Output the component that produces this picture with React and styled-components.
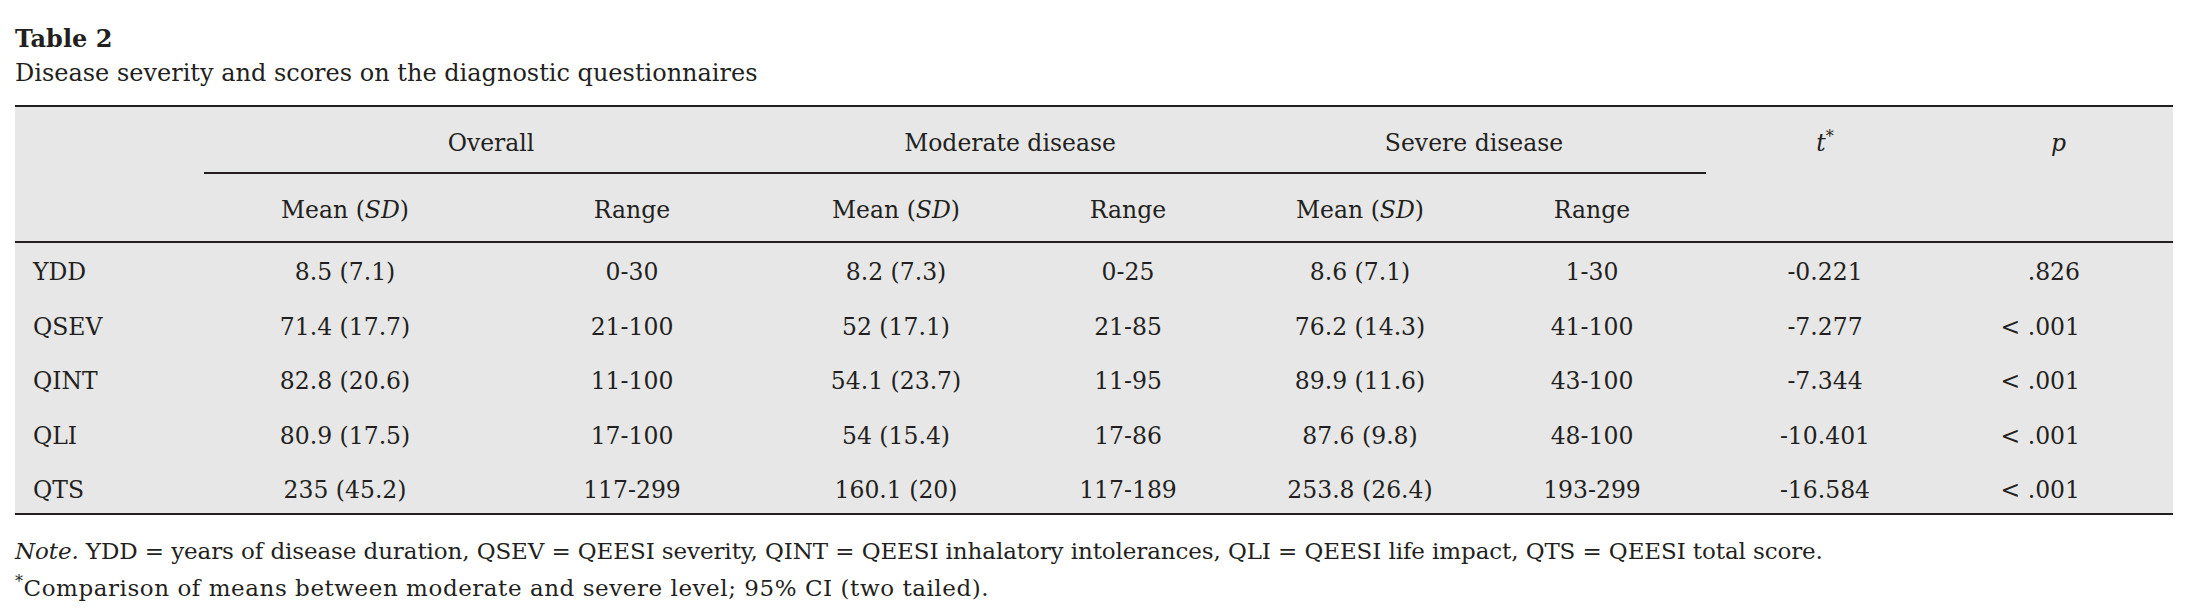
import React from "react";
import styled, { createGlobalStyle } from "styled-components";

const GlobalStyle = createGlobalStyle`
    html, body {
        margin: 0;
        padding: 0;
        background: #fff;
    }
    body {
        font-family: "DejaVu Serif", "Liberation Serif", serif;
        color: #231f20;
    }
`;

const COLS = "189px 282px 292px 236px 228px 236px 228px 238px 229px";

const Page = styled.div`
    padding: 21px 18px 0 15px;
    width: 2158px;
`;

const Caption = styled.div`
    display: flex;
    flex-direction: column;
    font-size: 24px;
    line-height: 35px;
`;

const Label = styled.span`
    font-weight: bold;
    font-size: 24px;
`;

const Table = styled.div`
    margin-top: 14px;
    border-top: 2px solid #231f20;
    border-bottom: 2px solid #231f20;
    background: #e7e7e7;
    font-size: 23.5px;
`;

const Head = styled.div`
    display: grid;
    grid-template-columns: ${COLS};
    grid-template-rows: 67px 67px;
    border-bottom: 2px solid #231f20;
`;

const HeadCell = styled.div`
    grid-column: ${props => props.$span ? `span ${props.$span}` : "auto"};
    border-bottom: ${props => props.$rule ? "2px solid #231f20" : "none"};
    padding-top: 22px;
    line-height: 28px;
    text-align: center;
    white-space: nowrap;
`;

const Body = styled.div`
    padding-top: 2px;
`;

const Row = styled.div`
    display: grid;
    grid-template-columns: ${COLS};
    height: 54.6px;
    line-height: 54.6px;
    white-space: nowrap;

    &:last-child {
        height: 50px;
    }
`;

const Cell = styled.div`
    text-align: ${props => props.$align || "center"};
    padding-left: ${props => props.$align === "left" ? "18px" : "0"};
    padding-right: ${props => props.$align === "right" ? "93px" : "0"};
`;

const Notes = styled.div`
    margin-top: 18px;
    font-size: 23px;
    line-height: 37px;
`;

const NoteLine = styled.div`
    letter-spacing: ${props => props.$spacing || "-0.1px"};
    white-space: nowrap;
`;

const Sup = styled.sup`
    font-size: 16px;
    line-height: 0;
    vertical-align: 9px;
`;

const rows = [
    ["YDD", "8.5 (7.1)", "0-30", "8.2 (7.3)", "0-25", "8.6 (7.1)", "1-30", "-0.221", ".826"],
    ["QSEV", "71.4 (17.7)", "21-100", "52 (17.1)", "21-85", "76.2 (14.3)", "41-100", "-7.277", "< .001"],
    ["QINT", "82.8 (20.6)", "11-100", "54.1 (23.7)", "11-95", "89.9 (11.6)", "43-100", "-7.344", "< .001"],
    ["QLI", "80.9 (17.5)", "17-100", "54 (15.4)", "17-86", "87.6 (9.8)", "48-100", "-10.401", "< .001"],
    ["QTS", "235 (45.2)", "117-299", "160.1 (20)", "117-189", "253.8 (26.4)", "193-299", "-16.584", "< .001"],
];

const MeanSD = () => <>Mean (<i>SD</i>)</>;

const App = () => {
    return (
        <Page>
            <GlobalStyle />
            <Caption>
                <Label>Table 2</Label>
                <span>Disease severity and scores on the diagnostic questionnaires</span>
            </Caption>
            <Table>
                <Head>
                    <HeadCell />
                    <HeadCell $span={2} $rule>Overall</HeadCell>
                    <HeadCell $span={2} $rule>Moderate disease</HeadCell>
                    <HeadCell $span={2} $rule>Severe disease</HeadCell>
                    <HeadCell><i>t</i><Sup>*</Sup></HeadCell>
                    <HeadCell><i>p</i></HeadCell>

                    <HeadCell />
                    <HeadCell><MeanSD /></HeadCell>
                    <HeadCell>Range</HeadCell>
                    <HeadCell><MeanSD /></HeadCell>
                    <HeadCell>Range</HeadCell>
                    <HeadCell><MeanSD /></HeadCell>
                    <HeadCell>Range</HeadCell>
                    <HeadCell />
                    <HeadCell />
                </Head>
                <Body>
                    {rows.map(r => (
                        <Row key={r[0]}>
                            {r.map((v, i) => (
                                <Cell key={i} $align={i === 0 ? "left" : i === 8 ? "right" : "center"}>{v}</Cell>
                            ))}
                        </Row>
                    ))}
                </Body>
            </Table>
            <Notes>
                <NoteLine><i>Note.</i> YDD = years of disease duration, QSEV = QEESI severity, QINT = QEESI inhalatory intolerances, QLI = QEESI life impact, QTS = QEESI total score.</NoteLine>
                <NoteLine $spacing="0.55px"><Sup>*</Sup>Comparison of means between moderate and severe level; 95% CI (two tailed).</NoteLine>
            </Notes>
        </Page>
    );
};

export default App;
